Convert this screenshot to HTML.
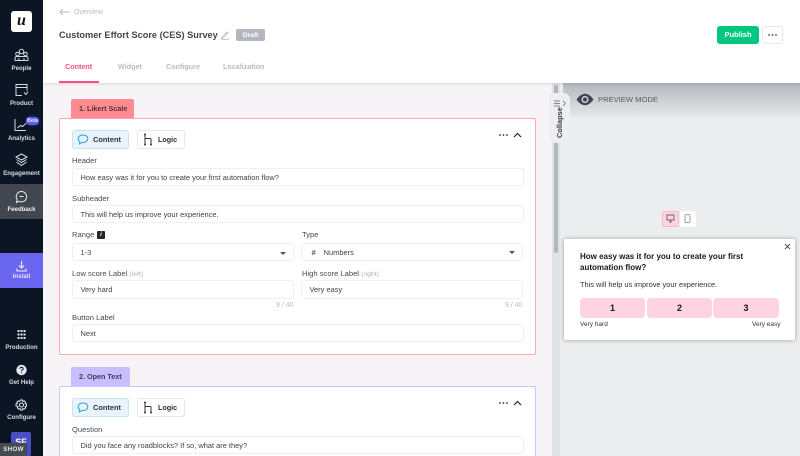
<!DOCTYPE html>
<html><head><meta charset="utf-8"><style>
*{box-sizing:border-box}
html,body{margin:0;padding:0;width:800px;height:456px;overflow:hidden;background:#f6f4f6;font-family:"Liberation Sans",sans-serif;color:#3a3f4a}
#r{position:relative;width:800px;height:456px;overflow:hidden}
.a{position:absolute;white-space:nowrap}
.nav{position:absolute;left:0;width:43px;text-align:center;color:#d8dce2;font-size:6.1px;font-weight:bold;white-space:nowrap}
.nav svg{position:absolute;left:13px}
.nav span{position:absolute;left:0;width:43px;text-align:center}
.i{position:absolute;background:#fff;border:1px solid #f0eff2;border-radius:3px;font-size:7.45px;color:#3d4350;padding-left:7.5px;line-height:18px}
.l{position:absolute;font-size:7.6px;color:#444a55;white-space:nowrap;line-height:10px}
.l em{font-style:normal;color:#b0b3ba;font-size:6.8px}
.b{position:absolute;height:19px;border-radius:3px;font-size:8px;font-weight:bold;color:#2c313b;line-height:17px}
.card{position:absolute;left:59px;width:477px;background:#fff;border-radius:2px}
.pop{position:absolute;top:298px;height:20px;background:#ffd3df;border-radius:4px;text-align:center;font-weight:bold;font-size:9px;line-height:20px;color:#14181f}
</style></head><body><div id="r">
<div class="a" style="left:43px;top:0;width:757px;height:83px;background:#fff;box-shadow:0 1px 3px rgba(0,0,0,.12);z-index:2"></div>
<div style="position:absolute;z-index:3;left:0;top:0;width:800px;height:83px">
<svg class="a" style="left:59px;top:8px" width="11" height="8" viewBox="0 0 11 8"><path d="M10.500 4H1M4 1 1 4l3 3" fill="none" stroke="#b5b8be" stroke-width=".9"/></svg>
<div class="a" style="left:74px;top:8px;font-size:6.900px;line-height:10px;color:#b9bcc2">Overview</div>
<div class="a" style="left:59px;top:29px;font-size:9.200px;line-height:13px;font-weight:bold;color:#3f444e">Customer Effort Score (CES) Survey</div>
<svg class="a" style="left:220px;top:30px" width="10" height="10" viewBox="0 0 10 10"><path d="M2 7 7 2l1 1-5 5-1.500.5zM1 9.500h8" fill="none" stroke="#b5b8be" stroke-width=".8"/></svg>
<div class="a" style="left:236px;top:29px;width:29px;height:12px;background:#b3b6bc;border-radius:2px;color:#fff;font-size:6.800px;font-weight:bold;line-height:13px;text-align:center">Draft</div>
<div class="a" style="left:65px;top:62px;font-size:7.200px;line-height:10px;font-weight:bold;color:#f4537c">Content</div>
<div class="a" style="left:118px;top:62px;font-size:7.200px;line-height:10px;font-weight:bold;color:#b9bcc2">Widget</div>
<div class="a" style="left:166px;top:62px;font-size:7.200px;line-height:10px;font-weight:bold;color:#b9bcc2">Configure</div>
<div class="a" style="left:223px;top:62px;font-size:7.200px;line-height:10px;font-weight:bold;color:#b9bcc2">Localization</div>
<div class="a" style="left:59px;top:81px;width:40px;height:2px;background:#fa4e80"></div>
<div class="a" style="left:717px;top:26px;width:42px;height:18px;background:#04c87f;border-radius:3px;color:#fff;font-size:7.500px;font-weight:bold;line-height:18px;text-align:center">Publish</div>
<div class="a" style="left:762px;top:26px;width:21px;height:18px;background:#fff;border:1px solid #e6e7ea;border-radius:3px"></div>
<svg class="a" style="left:768px;top:33px" width="9" height="4" viewBox="0 0 9 4" fill="#444"><circle cx="1" cy="2" r=".9"/><circle cx="4.500" cy="2" r=".9"/><circle cx="8" cy="2" r=".9"/></svg>
</div>

<!-- sidebar -->
<div class="a" style="left:0;top:0;width:43px;height:456px;background:#0b1524;z-index:5">
<div class="a" style="left:11px;top:11px;width:21px;height:21px;background:#fff;border-radius:3px;text-align:center;font:italic bold 16px/19px 'Liberation Serif',serif;color:#111">u</div>

<div class="nav" style="top:48px"><svg style="top:0" width="17" height="14" viewBox="0 0 17 14" fill="none" stroke="#d8dce2" stroke-width="1"><circle cx="8.500" cy="3.500" r="2.200"/><circle cx="4.500" cy="6" r="1.800"/><circle cx="12.500" cy="6" r="1.800"/><path d="M2 12.500V10.500q0-2 2-2h9q2 0 2 2v2zM6 12.500V10M11 12.500V10"/></svg><span style="top:17px">People</span></div>
<div class="nav" style="top:83px"><svg style="top:0" width="17" height="14" viewBox="0 0 17 14" fill="none" stroke="#d8dce2" stroke-width="1"><path d="M9 12.500H3V1.500h11v6M3 4.500h11M11 9.500l2 2 2-3"/></svg><span style="top:17px">Product</span></div>
<div class="nav" style="top:118px"><svg style="top:0" width="17" height="14" viewBox="0 0 17 14" fill="none" stroke="#d8dce2" stroke-width="1"><path d="M2 1v11.500h11M4.500 10l3-2.500 2 1 4-3.500"/></svg><span style="top:17px">Analytics</span></div>
<div class="a" style="left:26px;top:117px;width:13px;height:8px;background:#5d5ff2;border-radius:4px;color:#e6e8ff;font-size:5px;font-weight:bold;line-height:8px;text-align:center;box-shadow:0 0 3px #33369a">Beta</div>
<div class="nav" style="top:153px"><svg style="top:0" width="17" height="14" viewBox="0 0 17 14" fill="none" stroke="#d8dce2" stroke-width="1"><path d="M8.500 1 14 4 8.500 7 3 4zM3.500 6.500 8.500 9.500l5-3M3.500 9 8.500 12.500l5-3.500"/></svg><span style="top:17px">Engagement</span></div>
<div class="a" style="left:0;top:184px;width:43px;height:35px;background:#42474f"></div>
<div class="nav" style="top:188px;color:#f0f1f3"><svg style="top:2px" width="17" height="14" viewBox="0 0 17 14" fill="none" stroke="#e8eaec" stroke-width="1"><path d="M8.500 1.500a5.200 5.200 0 1 1-2.500 9.800L3.500 12.500l.6-3A5.200 5.200 0 0 1 8.500 1.500zM6.500 6.500h4"/></svg><span style="top:18px">Feedback</span></div>
<div class="a" style="left:0;top:253px;width:43px;height:35px;background:#6b66f0"></div>
<div class="nav" style="top:260px;color:#e4e3ff"><svg style="top:0" width="17" height="13" viewBox="0 0 17 13" fill="none" stroke="#f0f0ff" stroke-width="1.100"><path d="M8.500 1v6.500M6 5.500l2.500 2.500L11 5.500M4 8.500v2.500h9V8.500"/></svg><span style="top:13px">Install</span></div>
<div class="nav" style="top:329px"><svg style="top:0" width="17" height="12" viewBox="0 0 17 12" fill="#e6e8ec"><path d="M4.500 1h2v2h-2zM7.500 1h2v2h-2zM10.500 1h2v2h-2zM4.500 4.500h2v2h-2zM7.500 4.500h2v2h-2zM10.500 4.500h2v2h-2zM4.500 8h2v2h-2zM7.500 8h2v2h-2zM10.500 8h2v2h-2z"/></svg><span style="top:15px">Production</span></div>
<div class="nav" style="top:364px"><svg style="top:0" width="17" height="13" viewBox="0 0 17 13"><circle cx="8.500" cy="6" r="5.200" fill="#e6e8ec"/><path d="M6.800 4.800q.2-1.600 1.700-1.600t1.700 1.400q0 1-1.100 1.500-.6.300-.6 1" fill="none" stroke="#0b1524" stroke-width="1"/><circle cx="8.500" cy="8.800" r=".6" fill="#0b1524"/></svg><span style="top:15px">Get Help</span></div>
<div class="nav" style="top:399px"><svg style="top:0" width="17" height="13" viewBox="0 0 17 13" fill="none" stroke="#e6e8ec" stroke-width="1"><circle cx="8.500" cy="6" r="2"/><path d="M7.500 1h2l.4 1.500 1.400-.7 1.400 1.400-.7 1.400 1.500.4v2l-1.500.4.700 1.400-1.400 1.400-1.400-.7-.4 1.500h-2l-.4-1.500-1.400.7-1.400-1.400.7-1.400L3 7V5l1.500-.4-.7-1.400 1.400-1.400 1.400.7z"/></svg><span style="top:15px">Configure</span></div>
<div class="a" style="left:11px;top:432px;width:20px;height:24px;background:#4a4ec2;border-radius:2px;color:#fff;font-size:9px;font-weight:bold;line-height:20px;text-align:center">SF</div>
<div class="a" style="left:0;top:443px;width:27px;height:13px;background:#454a52;color:#e5e7ea;font-size:6.200px;font-weight:bold;line-height:14px;text-align:center;letter-spacing:.3px">SHOW</div>
</div>

<!-- Card 1 -->
<div class="a" style="left:71px;top:99px;width:63px;height:19px;background:#ff8a90;border-radius:2px 2px 0 0;color:#5b3138;font-size:7.200px;font-weight:bold;line-height:20px;padding-left:8px">1. Likert Scale</div>
<div class="card" style="top:118px;height:237px;border:1px solid #ffa9ad"></div>
<div class="b" style="left:72px;top:130px;width:57px;background:#e8f4fc;border:1px solid #c8e2f2"></div>
<div class="b" style="left:137px;top:130px;width:48px;background:#fff;border:1px solid #e4e6ea"></div>
<svg class="a" style="left:77px;top:134px" width="12" height="11" viewBox="0 0 12 11"><path d="M6 1C3 1 1.200 2.600 1.200 4.700c0 1.200.6 2.200 1.600 2.900L2.500 10l2.600-1.500h.9c3 0 4.800-1.700 4.800-3.800S9 1 6 1z" fill="none" stroke="#2d9de0" stroke-width="1"/></svg>
<div class="l" style="left:93px;top:135px;font-weight:bold;font-size:7.400px;color:#2c313b">Content</div>
<svg class="a" style="left:143px;top:133px" width="10" height="13" viewBox="0 0 10 13"><path d="M2 1v11M2 5.500h5q1 0 1 1V12" fill="none" stroke="#333" stroke-width="1"/><circle cx="2" cy="1.500" r="1" fill="#333"/><circle cx="2" cy="11.500" r="1" fill="#333"/><circle cx="8" cy="11.500" r="1" fill="#333"/></svg>
<div class="l" style="left:158px;top:135px;font-weight:bold;font-size:7.200px;color:#2c313b">Logic</div>
<svg class="a" style="left:499px;top:133px" width="9" height="4" viewBox="0 0 9 4" fill="#333"><circle cx="1" cy="2" r=".9"/><circle cx="4.500" cy="2" r=".9"/><circle cx="8" cy="2" r=".9"/></svg>
<svg class="a" style="left:513px;top:132px" width="9" height="6" viewBox="0 0 9 6"><path d="M1 5l3.500-3.500L8 5" fill="none" stroke="#222" stroke-width="1.200"/></svg>

<div class="l" style="left:72px;top:156px">Header</div>
<div class="i" style="left:72px;top:168px;width:452px;height:18px">How easy was it for you to create your first automation flow?</div>
<div class="l" style="left:72px;top:194px">Subheader</div>
<div class="i" style="left:72px;top:205px;width:452px;height:18px">This will help us improve your experience.</div>
<div class="l" style="left:72px;top:230px">Range</div>
<div class="a" style="left:97px;top:231px;width:8px;height:8px;background:#23262c;border-radius:1px;color:#fff;font:italic bold 6px/8px 'Liberation Serif',serif;text-align:center">i</div>
<div class="l" style="left:302px;top:230px">Type</div>
<div class="i" style="left:72px;top:243px;width:222px;height:18px">1-3</div>
<div class="a" style="left:280px;top:252px;width:0;height:0;border:3px solid transparent;border-top:3px solid #555;border-bottom:0"></div>
<div class="i" style="left:301px;top:243px;width:222px;height:18px"><span style="margin-left:2px;margin-right:8px;font-weight:bold;font-size:7.500px;color:#555">#</span>Numbers</div>
<div class="a" style="left:509px;top:251px;width:0;height:0;border:3px solid transparent;border-top:3px solid #555;border-bottom:0"></div>
<div class="l" style="left:72px;top:269px">Low score Label <em>(left)</em></div>
<div class="l" style="left:302px;top:269px">High score Label <em>(right)</em></div>
<div class="i" style="left:72px;top:280px;width:222px;height:19px">Very hard</div>
<div class="i" style="left:301px;top:280px;width:222px;height:19px">Very easy</div>
<div class="a" style="left:276px;top:301px;font-size:7px;line-height:10px;color:#b9bcc2">9 / 40</div>
<div class="a" style="left:505px;top:301px;font-size:7px;line-height:10px;color:#b9bcc2">9 / 40</div>
<div class="l" style="left:72px;top:313px">Button Label</div>
<div class="i" style="left:72px;top:324px;width:452px;height:18px">Next</div>

<!-- Card 2 -->
<div class="a" style="left:71px;top:367px;width:59px;height:19px;background:#c9beff;border-radius:2px 2px 0 0;color:#3f3a5f;font-size:7.200px;font-weight:bold;line-height:20px;padding-left:8px">2. Open Text</div>
<div class="card" style="top:386px;height:80px;border:1px solid #cdc5ff"></div>
<div class="b" style="left:72px;top:398px;width:57px;background:#e8f4fc;border:1px solid #c8e2f2"></div>
<div class="b" style="left:137px;top:398px;width:48px;background:#fff;border:1px solid #e4e6ea"></div>
<svg class="a" style="left:77px;top:402px" width="12" height="11" viewBox="0 0 12 11"><path d="M6 1C3 1 1.200 2.600 1.200 4.700c0 1.200.6 2.200 1.600 2.900L2.500 10l2.600-1.500h.9c3 0 4.800-1.700 4.800-3.800S9 1 6 1z" fill="none" stroke="#2d9de0" stroke-width="1"/></svg>
<div class="l" style="left:93px;top:403px;font-weight:bold;font-size:7.400px;color:#2c313b">Content</div>
<svg class="a" style="left:143px;top:401px" width="10" height="13" viewBox="0 0 10 13"><path d="M2 1v11M2 5.500h5q1 0 1 1V12" fill="none" stroke="#333" stroke-width="1"/><circle cx="2" cy="1.500" r="1" fill="#333"/><circle cx="2" cy="11.500" r="1" fill="#333"/><circle cx="8" cy="11.500" r="1" fill="#333"/></svg>
<div class="l" style="left:158px;top:403px;font-weight:bold;font-size:7.200px;color:#2c313b">Logic</div>
<svg class="a" style="left:499px;top:401px" width="9" height="4" viewBox="0 0 9 4" fill="#333"><circle cx="1" cy="2" r=".9"/><circle cx="4.500" cy="2" r=".9"/><circle cx="8" cy="2" r=".9"/></svg>
<svg class="a" style="left:513px;top:400px" width="9" height="6" viewBox="0 0 9 6"><path d="M1 5l3.500-3.500L8 5" fill="none" stroke="#222" stroke-width="1.200"/></svg>
<div class="l" style="left:72px;top:425px">Question</div>
<div class="i" style="left:72px;top:436px;width:452px;height:18px">Did you face any roadblocks? If so, what are they?</div>

<!-- gutter & preview -->
<div class="a" style="left:552px;top:83px;width:8px;height:373px;background:#dfe3e5"></div>
<div class="a" style="left:554px;top:85px;width:4px;height:168px;background:#b2b7bc;border-radius:2px"></div>
<div class="a" style="left:560px;top:83px;width:240px;height:373px;background:#ecedef"></div>
<div class="a" style="left:563px;top:83px;width:237px;height:34px;background:linear-gradient(#b4b7bf,#e6e7e9)"></div>
<svg class="a" style="left:576px;top:93px" width="18" height="13" viewBox="0 0 18 13"><path d="M.5 6.500Q4.500.8 9 .8t8.500 5.700Q13.500 12.200 9 12.200T.5 6.500z" fill="#3f4450"/><circle cx="9" cy="6.500" r="3.600" fill="#d0d2d6"/><circle cx="9" cy="6.500" r="2.100" fill="#3f4450"/></svg>
<div class="a" style="left:598px;top:95px;font-size:7.600px;line-height:10px;color:#555962">PREVIEW MODE</div>
<div class="a" style="left:549px;top:93px;width:21px;height:50px;background:#eceef0;border-radius:6px"></div>
<svg class="a" style="left:554px;top:100px" width="13" height="7" viewBox="0 0 13 7"><path d="M0 1h6M0 3.500h6M0 6h6M9 1l2.500 2.500L9 6" fill="none" stroke="#666" stroke-width=".7"/></svg>
<div class="a" style="left:555px;top:109px;width:10px;height:29px;font-size:7.400px;font-weight:bold;color:#3b3f48;line-height:10px;writing-mode:vertical-rl;transform:rotate(180deg);text-align:left">Collapse</div>

<div class="a" style="left:662px;top:211px;width:17px;height:16px;background:#ffd3df;border:1px dotted #f6a6bb;border-radius:2px"></div>
<svg class="a" style="left:666px;top:214px" width="9" height="9" viewBox="0 0 9 9"><path d="M1 1h7v5H1zM3 8h3M4.500 6v2" fill="none" stroke="#666" stroke-width=".9"/></svg>
<div class="a" style="left:680px;top:211px;width:16px;height:16px;background:#fff;border-radius:2px"></div>
<svg class="a" style="left:684px;top:214px" width="7" height="10" viewBox="0 0 7 10"><rect x="1" y=".7" width="5" height="8" rx="1" fill="none" stroke="#777" stroke-width=".7"/></svg>

<div class="a" style="left:564px;top:239px;width:231px;height:101px;background:#fff;border-radius:2px;box-shadow:0 0 4px rgba(50,55,70,.45)"></div>
<svg class="a" style="left:784px;top:243px" width="7" height="7" viewBox="0 0 7 7"><path d="M1 1l5 5M6 1 1 6" stroke="#222" stroke-width=".8"/></svg>
<div class="a" style="left:580px;top:251px;font-size:8px;line-height:11px;font-weight:bold;color:#14181f">How easy was it for you to create your first</div>
<div class="a" style="left:580px;top:262px;font-size:8px;line-height:11px;font-weight:bold;color:#14181f">automation flow?</div>
<div class="a" style="left:580px;top:280px;font-size:7.400px;line-height:10px;color:#2e323a">This will help us improve your experience.</div>
<div class="pop" style="left:580px;width:65px">1</div>
<div class="pop" style="left:647px;width:65px">2</div>
<div class="pop" style="left:713px;width:66px">3</div>
<div class="a" style="left:580px;top:320px;font-size:6.500px;line-height:10px;color:#2e323a">Very hard</div>
<div class="a" style="left:752px;top:320px;font-size:6.500px;line-height:10px;color:#2e323a">Very easy</div>
</div></body></html>
